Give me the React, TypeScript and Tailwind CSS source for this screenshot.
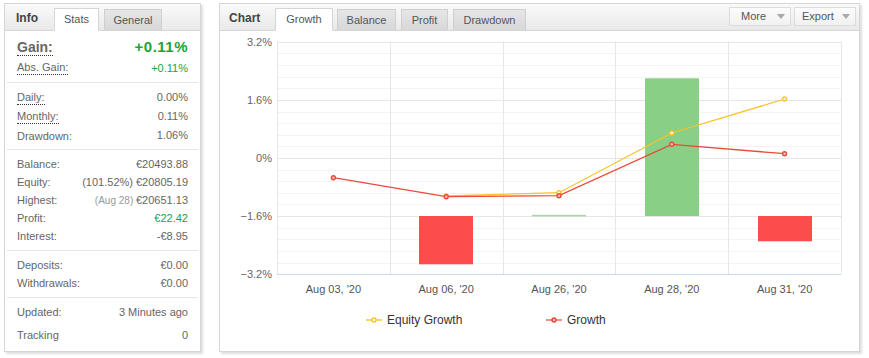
import React from "react";

const FONT = "font-['Liberation_Sans',Arial,sans-serif]";

type RowProps = {
  label: string;
  value: React.ReactNode;
  dotted?: boolean;
  valueClass?: string;
  h?: string;
};

function Row({ label, value, dotted, valueClass, h }: RowProps) {
  return (
    <div className={`flex items-center justify-between ${h ?? "h-[18px]"}`}>
      <span
        className={
          dotted
            ? "leading-[13px] border-b border-dotted border-[#333]"
            : "leading-[12px]"
        }
      >
        {label}
      </span>
      <span className={valueClass ?? "text-[#666]"}>{value}</span>
    </div>
  );
}

function LeftPanel() {
  return (
    <div className="w-[197px] h-[349px] shrink-0 border border-[#d6d6d6] bg-white shadow-[2px_2px_2px_rgba(0,0,0,0.13)] flex flex-col text-[11px] text-[#666]">
      <div className="h-[27px] flex items-end border-b border-[#d6d6d6] bg-linear-to-b from-[#fafafa] to-[#e9e9e9]">
        <div className="w-[49px] pl-[11px] self-center mt-[1px] font-bold text-[12px] text-[#444]">
          Info
        </div>
        <div className="w-[45px] h-[23px] -mb-px border border-[#d6d6d6] border-b-white bg-white flex items-center justify-center text-[#555]">
          Stats
        </div>
        <div className="ml-[5px] w-[58px] h-[21px] border border-[#cfcfcf] border-b-0 bg-linear-to-b from-[#e6e6e6] to-[#d8d8d8] flex items-center justify-center text-[#555]">
          General
        </div>
      </div>

      <div className="px-[12px] pt-[6px] pb-[5px]">
        <div className="flex items-center justify-between h-[20px]">
          <span className="font-bold text-[14px] leading-[16px] text-[#666] border-b border-dotted border-[#333]">
            Gain:
          </span>
          <span className="font-bold text-[15px] tracking-[0.5px] text-[#17a63a]">
            +0.11%
          </span>
        </div>
        <div className="mt-[2px]">
          <Row label="Abs. Gain:" value="+0.11%" dotted valueClass="text-[#17a63a]" />
        </div>
      </div>
      <div className="mx-[2px] border-t border-[#e6e6e6]" />

      <div className="px-[12px] pt-[5px] pb-[4px]">
        <Row label="Daily:" value="0.00%" dotted h="h-[19px]" />
        <Row label="Monthly:" value="0.11%" dotted h="h-[19px]" />
        <Row label="Drawdown:" value="1.06%" h="h-[19px]" />
      </div>
      <div className="mx-[2px] border-t border-[#e6e6e6]" />

      <div className="px-[12px] pt-[5px] pb-[5px]">
        <Row label="Balance:" value="€20493.88" />
        <Row label="Equity:" value="(101.52%) €20805.19" />
        <Row
          label="Highest:"
          value={
            <>
              <span className="text-[10px] text-[#999]">(Aug 28) </span>€20651.13
            </>
          }
        />
        <Row label="Profit:" value="€22.42" valueClass="text-[#17a63a]" />
        <Row label="Interest:" value="-€8.95" />
      </div>
      <div className="mx-[2px] border-t border-[#e6e6e6]" />

      <div className="px-[12px] pt-[5px] pb-[5px]">
        <Row label="Deposits:" value="€0.00" />
        <Row label="Withdrawals:" value="€0.00" />
      </div>
      <div className="mx-[2px] border-t border-[#e6e6e6]" />

      <div className="px-[12px] pt-[5px] flex flex-col gap-[5px]">
        <Row label="Updated:" value="3 Minutes ago" />
        <Row label="Tracking" value="0" />
      </div>
    </div>
  );
}

function Tab({ label, active, w, ml }: { label: string; active?: boolean; w: string; ml: string }) {
  return active ? (
    <div className={`${w} ${ml} h-[23px] -mb-px border border-[#d6d6d6] border-b-white bg-white flex items-center justify-center text-[#555]`}>
      {label}
    </div>
  ) : (
    <div className={`${w} ${ml} h-[21px] border border-[#cfcfcf] border-b-0 bg-linear-to-b from-[#e6e6e6] to-[#d8d8d8] flex items-center justify-center text-[#555]`}>
      {label}
    </div>
  );
}

function DropButton({ label, w, ml, textW }: { label: string; w: string; ml: string; textW: string }) {
  return (
    <div className={`${w} ${ml} h-[19px] border border-[#dcdcdc] bg-linear-to-b from-[#fcfcfc] to-[#f1f1f1] flex items-center text-[#555]`}>
      <span className={`${textW} pl-[7px]`}>{label}</span>
      <svg width="8" height="6" viewBox="0 0 8 6" className="ml-auto mr-[5px]">
        <path d="M0 0 L8 0 L4 5 Z" fill="#a8a8a8" />
      </svg>
    </div>
  );
}

const X0 = 277;
const CW = 112.8;
const cx = (i: number) => X0 + CW * (i + 0.5);
const cats = ["Aug 03, '20", "Aug 06, '20", "Aug 26, '20", "Aug 28, '20", "Aug 31, '20"];

function Chart() {
  const hLines: React.ReactNode[] = [];
  for (let k = 0; k < 20; k++) {
    const y = Math.round(41.8 + k * 11.62) + 0.5;
    const major = k % 5 === 0;
    hLines.push(
      <line key={"h" + k} x1={X0} x2={841} y1={y} y2={y} stroke={major ? "#e6e6e6" : "#f3f3f3"} strokeWidth={1} />
    );
  }
  const vLines = [0, 1, 2, 3, 4, 5].map((i) => {
    const x = Math.round(X0 + i * CW) + 0.5;
    return <line key={"v" + i} x1={x} x2={x} y1={41.5} y2={274} stroke="#e6e6e6" strokeWidth={1} />;
  });
  const yLabels: [string, number][] = [
    ["3.2%", 41.8],
    ["1.6%", 99.9],
    ["0%", 158],
    ["−1.6%", 216.1],
    ["−3.2%", 274.2],
  ];
  const growth: [number, number][] = [
    [cx(0), 177.7],
    [cx(1), 196.7],
    [cx(2), 195.7],
    [cx(3), 144.3],
    [cx(4), 153.7],
  ];
  const equity: [number, number][] = [
    [cx(1), 196],
    [cx(2), 192.7],
    [cx(3), 133],
    [cx(4), 99],
  ];
  const toPath = (pts: [number, number][]) =>
    pts.map((p, i) => `${i === 0 ? "M" : "L"}${p[0].toFixed(1)} ${p[1].toFixed(1)}`).join(" ");

  return (
    <svg width="639" height="320" viewBox="0 0 639 320" className="block">
      <g transform="translate(-220,-31)" fontFamily="'Liberation Sans', Arial, sans-serif">
        {hLines}
        {vLines}
        <line x1={X0} x2={841} y1={274.5} y2={274.5} stroke="#ccd6eb" strokeWidth={1} />

        <rect x={419} y={216} width={54} height={48.3} fill="#fd4c4c" />
        <rect x={532} y={214.8} width={54} height={1.6} fill="#a6d7a2" />
        <rect x={645} y={78.3} width={54} height={137.7} fill="#89cf85" />
        <rect x={758} y={216} width={54} height={25.3} fill="#fd4c4c" />

        <path d={toPath(equity)} fill="none" stroke="#f8c42a" strokeWidth={1.3} />
        <path d={toPath(growth)} fill="none" stroke="#ec4a38" strokeWidth={1.3} />
        {equity.map((p, i) => (
          <circle key={"e" + i} cx={p[0]} cy={p[1]} r={2} fill="#fff" stroke="#f8c42a" strokeWidth={1.4} />
        ))}
        {growth.map((p, i) => (
          <circle key={"g" + i} cx={p[0]} cy={p[1]} r={2} fill="#fbb" stroke="#ec4a38" strokeWidth={1.4} />
        ))}

        {yLabels.map(([t, y]) => (
          <text key={t} x={272} y={y + 4} textAnchor="end" fontSize={11} fill="#666">
            {t}
          </text>
        ))}
        {cats.map((t, i) => (
          <text key={t} x={cx(i)} y={293} textAnchor="middle" fontSize={11} fill="#555">
            {t}
          </text>
        ))}

        <line x1={366} x2={382} y1={320} y2={320} stroke="#f8c42a" strokeWidth={2} opacity={0.7} />
        <circle cx={374} cy={320} r={2} fill="#fff" stroke="#f8c42a" strokeWidth={1.4} />
        <text x={387} y={324} fontSize={12} fill="#333">
          Equity Growth
        </text>
        <line x1={546} x2={562} y1={320} y2={320} stroke="#ec4a38" strokeWidth={2} opacity={0.6} />
        <circle cx={554} cy={320} r={2} fill="#fbb" stroke="#ec4a38" strokeWidth={1.4} />
        <text x={567} y={324} fontSize={12} fill="#333">
          Growth
        </text>
      </g>
    </svg>
  );
}

function RightPanel() {
  return (
    <div className="w-[641px] h-[349px] shrink-0 border border-[#d6d6d6] bg-white shadow-[2px_2px_2px_rgba(0,0,0,0.13)] flex flex-col text-[11px] text-[#666]">
      <div className="h-[27px] flex items-end border-b border-[#d6d6d6] bg-linear-to-b from-[#fafafa] to-[#e9e9e9]">
        <div className="w-[55px] pl-[9px] self-center mt-[1px] font-bold text-[12px] text-[#444]">Chart</div>
        <Tab label="Growth" active w="w-[58px]" ml="ml-0" />
        <Tab label="Balance" w="w-[59px]" ml="ml-[4px]" />
        <Tab label="Profit" w="w-[47px]" ml="ml-[5px]" />
        <Tab label="Drawdown" w="w-[73px]" ml="ml-[5px]" />
        <div className="ml-auto self-start mt-[3px] flex mr-[3px]">
          <DropButton label="More" w="w-[62px]" ml="ml-0" textW="w-[40px] pl-[11px]" />
          <DropButton label="Export" w="w-[62px]" ml="ml-[3px]" textW="w-[40px]" />
        </div>
      </div>
      <Chart />
    </div>
  );
}

export default function App() {
  return (
    <div className={`${FONT} w-[869px] h-[358px] bg-white flex items-start gap-[18px] pl-[4px] pt-[3px]`}>
      <LeftPanel />
      <RightPanel />
    </div>
  );
}
